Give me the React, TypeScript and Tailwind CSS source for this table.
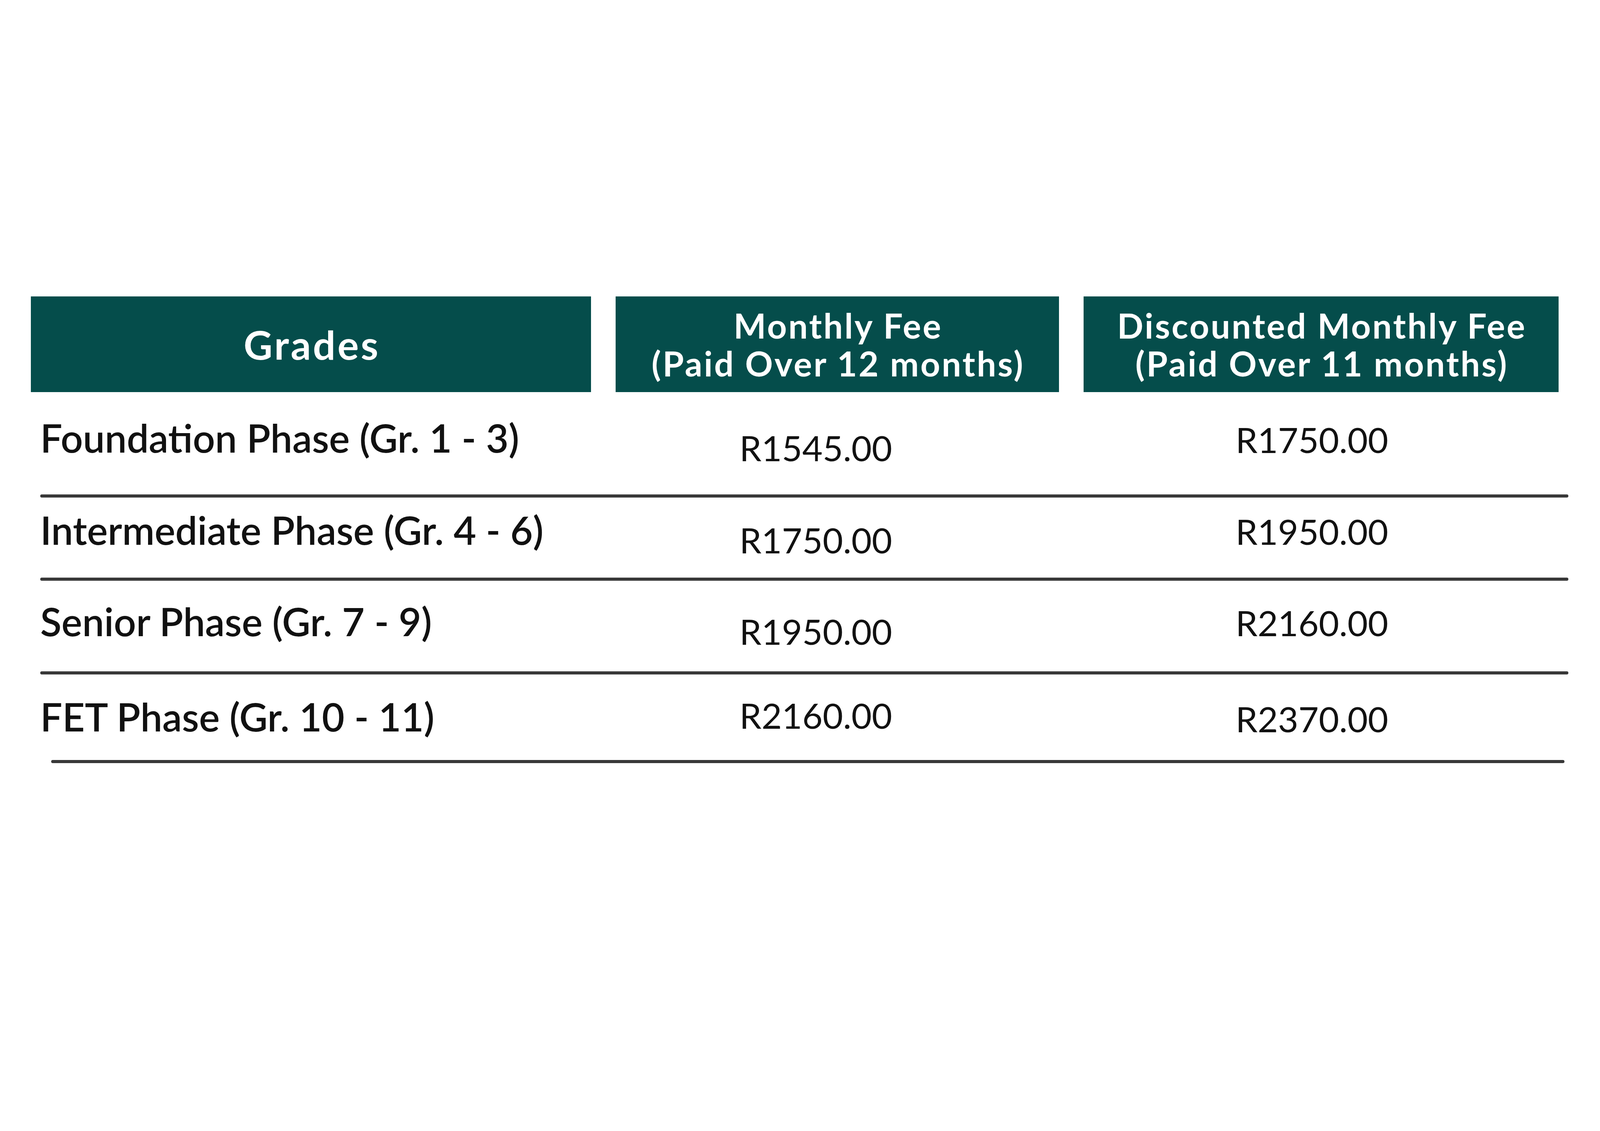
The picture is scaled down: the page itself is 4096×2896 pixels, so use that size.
import React from "react";

const rows = [
  { label: "Foundation Phase (Gr. 1 - 3)", a: "R1545.00", b: "R1750.00", h: "h-[262px]", pl: "pt-[66px]", pa: "pt-[97px]", pb: "pt-[76px]" },
  { label: "Intermediate Phase (Gr. 4 - 6)", a: "R1750.00", b: "R1950.00", h: "h-[205px]", pl: "pt-[32px]", pa: "pt-[63px]", pb: "pt-[41px]" },
  { label: "Senior Phase (Gr. 7 - 9)", a: "R1950.00", b: "R2160.00", h: "h-[232px]", pl: "pt-[53px]", pa: "pt-[84px]", pb: "pt-[62px]" },
  { label: "FET Phase (Gr. 10 - 11)", a: "R2160.00", b: "R2370.00", h: "h-[219px]", pl: "pt-[57px]", pa: "pt-[59px]", pb: "pt-[68px]" },
];

export default function App() {
  return (
    <div className="w-[4096px] h-[2896px] bg-white overflow-hidden" style={{ fontFamily: "Lato, 'Open Sans', sans-serif" }}>
      <div className="h-[759px]" />
      <div className="flex pl-[79px] gap-[63px] text-white font-bold">
        <div className="w-[1434px] h-[245px] bg-[#054d4b] flex items-center justify-center pl-[5px] text-[102px] leading-none tracking-[5px]">Grades</div>
        <div className="w-[1135px] h-[245px] bg-[#054d4b] flex flex-col items-center justify-center pl-[4px] text-[88px] leading-[97px] tracking-[4px] text-center">
          <span>Monthly Fee</span>
          <span>(Paid Over 12 months)</span>
        </div>
        <div className="w-[1216px] h-[245px] bg-[#054d4b] flex flex-col items-center justify-center pl-[4px] text-[88px] leading-[97px] tracking-[4px] text-center">
          <span>Discounted Monthly Fee</span>
          <span>(Paid Over 11 months)</span>
        </div>
      </div>
      {rows.map((r, i) => (
        <div key={i}>
          <div className={`flex pl-[103px] ${r.h} text-[#111]`}>
            <div className={`w-[1790px] ${r.pl} text-[100px] leading-none font-semibold whitespace-nowrap`}>{r.label}</div>
            <div className={`w-[1270px] ${r.pa} text-[90px] leading-none font-normal whitespace-nowrap`}>{r.a}</div>
            <div className={`flex-1 ${r.pb} text-[90px] leading-none font-normal whitespace-nowrap`}>{r.b}</div>
          </div>
          {i < 3 ? (
            <div className="ml-[103px] w-[3912px] h-[8px] rounded-full bg-[#383838]" />
          ) : (
            <div className="ml-[131px] w-[3874px] h-[8px] rounded-full bg-[#383838]" />
          )}
        </div>
      ))}
    </div>
  );
}
